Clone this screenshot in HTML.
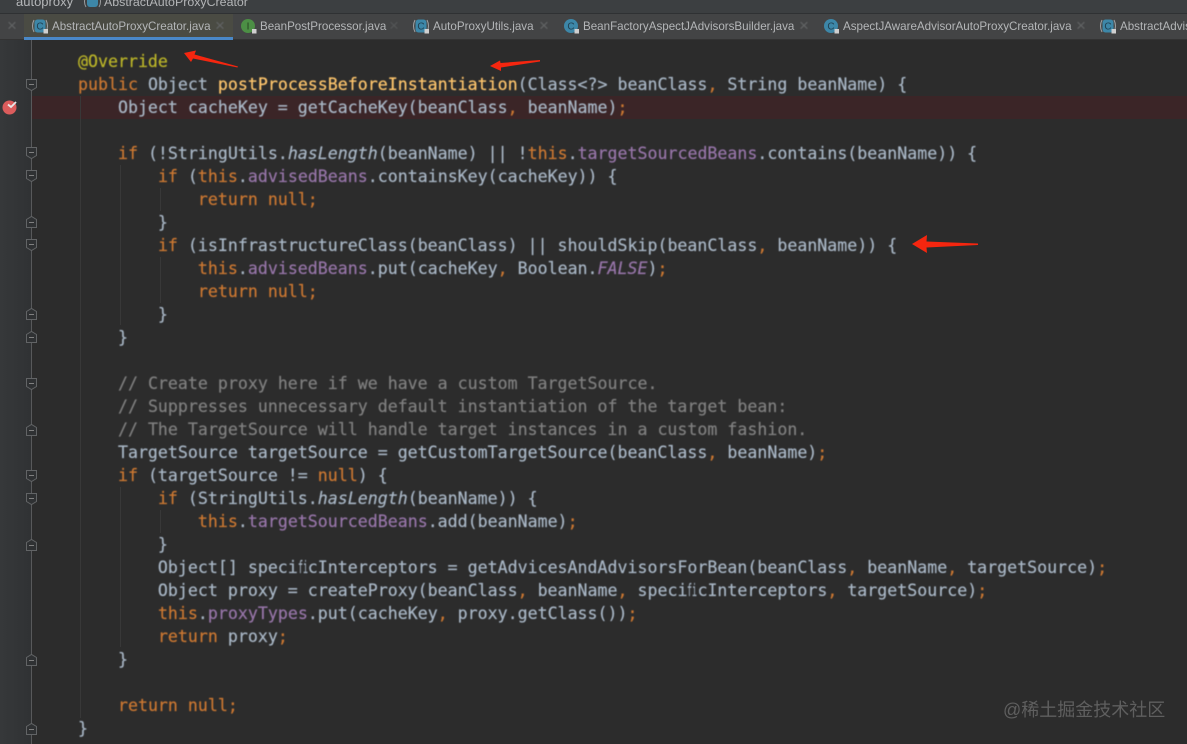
<!DOCTYPE html>
<html><head><meta charset="utf-8">
<style>
html,body{margin:0;padding:0;background:#2b2b2b}
#p{position:relative;width:1187px;height:744px;overflow:hidden;background:#2c2c2c}
.abs{position:absolute}
#crumb{left:0;top:0;width:1187px;height:13px;background:#3c3f41;border-bottom:1px solid #2f3133}
#tabs{left:0;top:14px;width:1187px;height:25px;background:#434445;border-bottom:1px solid #333}
#active{left:24px;top:14px;width:209px;height:23px;background:#4a4b43}
#ul{left:24px;top:37px;width:209px;height:3px;background:#4a88c7}
#gutter{left:0;top:40px;width:31px;height:704px;background:linear-gradient(90deg,#36383a,#303234)}
#gl{left:31px;top:40px;width:1px;height:704px;background:#58595b}
#bp{left:32px;top:96px;width:1155px;height:23px;background:#3b2527}
.t{position:absolute;top:20px;font:11.6px/14px "Liberation Sans",sans-serif;color:#b4b6b8;white-space:nowrap;filter:blur(.3px)}
.x{position:absolute;top:17px;font:17px/18px "Liberation Sans",sans-serif;color:#626465;width:16px;text-align:center;filter:blur(.4px)}
.l{position:absolute;left:78px;font:16.6px/23px "DejaVu Sans Mono","Liberation Mono",monospace;color:#a9b7c6;white-space:pre;filter:blur(.4px);-webkit-text-stroke:.2px currentColor}
.k{color:#cc7832}.m{color:#ffc66d}.a{color:#bbb529}.p{color:#9876aa}.c{color:#808080}.i{font-style:italic}
.fi{display:inline-block;width:10px;transform:scaleX(.5);transform-origin:0 0}
.g{position:absolute;width:1px;background:#383838}
#wm{position:absolute;left:1003px;top:699px;font:18px/22px "Liberation Sans","Noto Sans CJK SC",sans-serif;color:#5f5f5f;filter:blur(.3px)}
svg{position:absolute;left:0;top:0}
</style></head><body><div id="p">
<div class="abs" id="crumb"></div>
<div class="abs" id="tabs"></div>
<div class="abs" id="active"></div>
<div class="abs" id="ul"></div>
<div class="abs" id="gutter"></div>
<div class="abs" id="gl"></div>
<div class="abs" id="bp"></div>
<div class="g" style="left:80px;top:96px;height:622px"></div>
<div class="g" style="left:120px;top:165px;height:160px"></div>
<div class="g" style="left:120px;top:487px;height:160px"></div>
<div class="g" style="left:160px;top:188px;height:23px"></div>
<div class="g" style="left:160px;top:257px;height:46px"></div>
<div class="g" style="left:160px;top:510px;height:23px"></div>
<div class="t" style="left:16px;top:-5px;font-size:13px">autoproxy</div>
<div class="t" style="left:104px;top:-5px;font-size:12.4px">AbstractAutoProxyCreator</div>
<div class="t" style="left:52px">AbstractAutoProxyCreator.java</div><div class="x" style="left:212px">×</div>
<div class="t" style="left:260px">BeanPostProcessor.java</div><div class="x" style="left:386px;color:#545657">×</div>
<div class="t" style="left:433px">AutoProxyUtils.java</div><div class="x" style="left:536px">×</div>
<div class="t" style="left:583px">BeanFactoryAspectJAdvisorsBuilder.java</div>
<div class="x" style="left:796px">×</div>
<div class="t" style="left:843px">AspectJAwareAdvisorAutoProxyCreator.java</div><div class="x" style="left:1073px">×</div>
<div class="t" style="left:1120px">AbstractAdvisor</div>
<div class="x" style="left:4px">×</div>

<div class="l" style="top:50px"><span class="a">@Override</span></div>
<div class="l" style="top:73px"><span class="k">public</span> Object <span class="m">postProcessBeforeInstantiation</span>(Class&lt;?&gt; beanClass<span class="k">,</span> String beanName) {</div>
<div class="l" style="top:96px">    Object cacheKey = getCacheKey(beanClass<span class="k">,</span> beanName)<span class="k">;</span></div>
<div class="l" style="top:142px">    <span class="k">if</span> (!StringUtils.<span class="i">hasLength</span>(beanName) || !<span class="k">this</span>.<span class="p">targetSourcedBeans</span>.contains(beanName)) {</div>
<div class="l" style="top:165px">        <span class="k">if</span> (<span class="k">this</span>.<span class="p">advisedBeans</span>.containsKey(cacheKey)) {</div>
<div class="l" style="top:188px">            <span class="k">return null;</span></div>
<div class="l" style="top:211px">        }</div>
<div class="l" style="top:234px">        <span class="k">if</span> (isInfrastructureClass(beanClass) || shouldSkip(beanClass<span class="k">,</span> beanName)) {</div>
<div class="l" style="top:257px">            <span class="k">this</span>.<span class="p">advisedBeans</span>.put(cacheKey<span class="k">,</span> Boolean.<span class="p i">FALSE</span>)<span class="k">;</span></div>
<div class="l" style="top:280px">            <span class="k">return null;</span></div>
<div class="l" style="top:303px">        }</div>
<div class="l" style="top:326px">    }</div>
<div class="l" style="top:372px">    <span class="c">// Create proxy here if we have a custom TargetSource.</span></div>
<div class="l" style="top:395px">    <span class="c">// Suppresses unnecessary default instantiation of the target bean:</span></div>
<div class="l" style="top:418px">    <span class="c">// The TargetSource will handle target instances in a custom fashion.</span></div>
<div class="l" style="top:441px">    TargetSource targetSource = getCustomTargetSource(beanClass<span class="k">,</span> beanName)<span class="k">;</span></div>
<div class="l" style="top:464px">    <span class="k">if</span> (targetSource != <span class="k">null</span>) {</div>
<div class="l" style="top:487px">        <span class="k">if</span> (StringUtils.<span class="i">hasLength</span>(beanName)) {</div>
<div class="l" style="top:510px">            <span class="k">this</span>.<span class="p">targetSourcedBeans</span>.add(beanName)<span class="k">;</span></div>
<div class="l" style="top:533px">        }</div>
<div class="l" style="top:556px">        Object[] speci<span class="fi">fi</span>cInterceptors = getAdvicesAndAdvisorsForBean(beanClass<span class="k">,</span> beanName<span class="k">,</span> targetSource)<span class="k">;</span></div>
<div class="l" style="top:579px">        Object proxy = createProxy(beanClass<span class="k">,</span> beanName<span class="k">,</span> speci<span class="fi">fi</span>cInterceptors<span class="k">,</span> targetSource)<span class="k">;</span></div>
<div class="l" style="top:602px">        <span class="k">this</span>.<span class="p">proxyTypes</span>.put(cacheKey<span class="k">,</span> proxy.getClass())<span class="k">;</span></div>
<div class="l" style="top:625px">        <span class="k">return</span> proxy<span class="k">;</span></div>
<div class="l" style="top:648px">    }</div>
<div class="l" style="top:694px">    <span class="k">return null;</span></div>
<div class="l" style="top:717px">}</div>

<svg width="1187" height="744" viewBox="0 0 1187 744">
<defs>
<g id="fd"><path d="M-5 -5.5H5V2.5L0 5.5L-5 2.5Z" fill="#2f3133" stroke="#626466"/><path d="M-2.5 -.5H2.5" stroke="#808080"/></g>
<g id="fu"><path d="M-5 5.5H5V-2.5L0 -5.5L-5 -2.5Z" fill="#2f3133" stroke="#626466"/><path d="M-2.5 .5H2.5" stroke="#808080"/></g>
<g id="ic"><circle r="7" fill="#3d87a8"/><text y="3.5" text-anchor="middle" font-family="Liberation Sans" font-size="10" fill="#1f3f50">C</text><rect x="3.5" y="3" width="4.5" height="4.5" fill="#cfcfcf"/></g>
<g id="ab"><rect x="-5.5" y="-6.5" width="11" height="13" rx="3" fill="#3d87a8"/><path d="M-6 -6Q-9 0 -6 6M6 -6Q9 0 6 6" fill="none" stroke="#9a9c9e" stroke-width="1.1"/><text y="3.5" text-anchor="middle" font-family="Liberation Sans" font-size="10" fill="#1f3f50">C</text><rect x="3.5" y="3" width="4.5" height="4.5" fill="#cfcfcf"/></g>
</defs>
<use href="#fd" x="31.5" y="85"/><use href="#fd" x="31.5" y="153"/><use href="#fd" x="31.5" y="176"/>
<use href="#fu" x="31.5" y="222"/><use href="#fd" x="31.5" y="245"/><use href="#fu" x="31.5" y="314"/>
<use href="#fu" x="31.5" y="337"/><use href="#fd" x="31.5" y="384"/><use href="#fu" x="31.5" y="430"/>
<use href="#fd" x="31.5" y="476"/><use href="#fd" x="31.5" y="499"/><use href="#fu" x="31.5" y="545"/>
<use href="#fu" x="31.5" y="660"/><use href="#fu" x="31.5" y="729"/>
<circle cx="9.5" cy="107.5" r="7" fill="#db5c5c"/><path d="M8 104.5l3 2.5l5-5" fill="none" stroke="#e8e8e8" stroke-width="1.8"/>
<use href="#ab" x="40" y="26"/><use href="#ab" x="421" y="26"/><use href="#ab" x="1108" y="26"/>
<use href="#ic" x="571" y="26"/><use href="#ic" x="831" y="26"/>
<circle cx="248" cy="26" r="7" fill="#4c8f45"/><text x="248" y="29.5" text-anchor="middle" font-family="Liberation Sans" font-size="10" fill="#24401f">I</text><rect x="252" y="29" width="4.5" height="4.5" fill="#cfcfcf"/>
<rect x="87" y="-5" width="11" height="12" rx="3" fill="#3d87a8"/><path d="M86 -4Q83 2 86 7M99 -4Q102 2 99 7" fill="none" stroke="#9a9c9e"/>
<g fill="#f5260f">
<path d="M184 53L196 50.5L194.5 54.5L238 66.5L237.5 67.5L193 58.5L191 62Z"/>
<path d="M490 66L500 60.5L500.5 63L540 60L540 61.5L501 67.5L501 71Z"/>
<path d="M912 244L927 235L926.5 241.5L978 243.5L978 245L926.5 247.5L927 253Z"/>
</g>
</svg>
<div id="wm">@稀土掘金技术社区</div>
</div></body></html>
